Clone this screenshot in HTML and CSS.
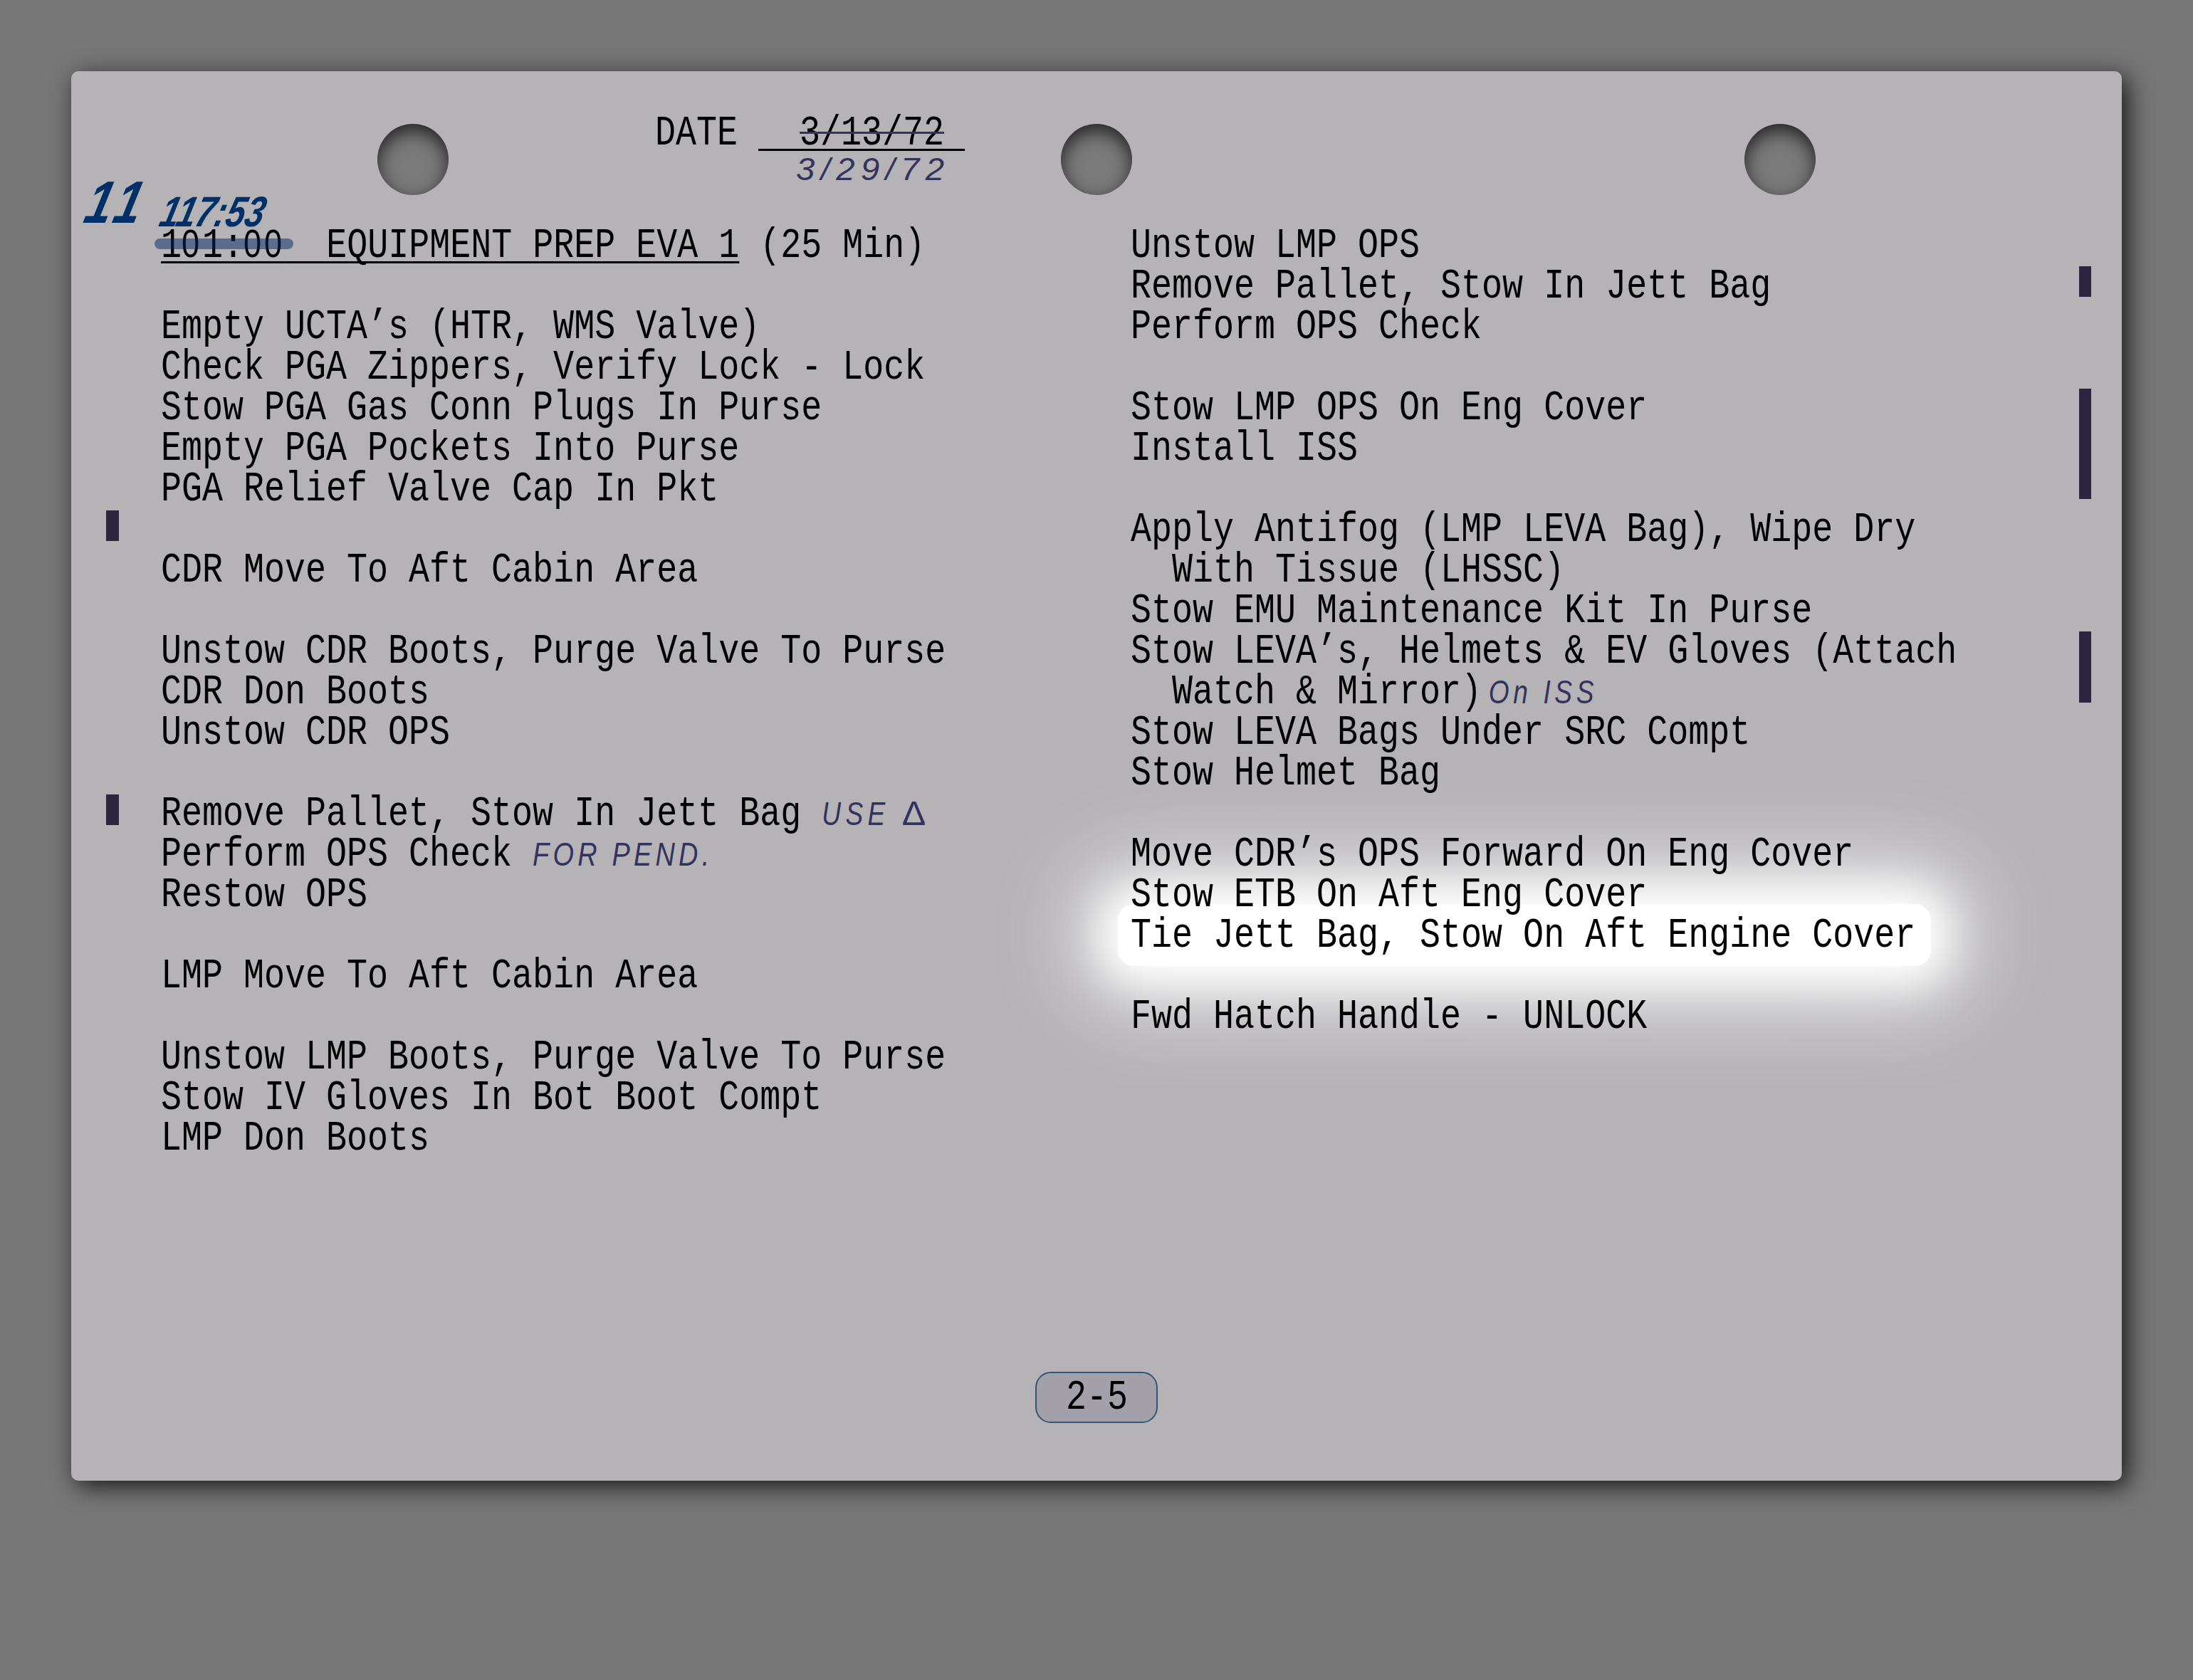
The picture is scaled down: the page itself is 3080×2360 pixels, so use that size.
FILE: index.html
```html
<!DOCTYPE html>
<html lang="en">
<head>
<meta charset="utf-8">
<title>Checklist page 2-5</title>
<link rel="stylesheet" href="styles.css">
</head>
<body>
<main class="paper">
  <div class="holes"><span class="hole"></span><span class="hole"></span><span class="hole"></span></div>
  <div class="highlight"></div>

  <span class="bar bar-l1"></span>
  <span class="bar bar-l2"></span>
  <span class="bar bar-r1"></span>
  <span class="bar bar-r2"></span>
  <span class="bar bar-r3"></span>

  <header class="date-row"><span class="line">DATE <span class="ul">  <span class="strike">3/13/72</span> </span></span></header>
  <span class="note new-date">3/29/72</span>

  <div class="columns">
    <section class="col">
      <div class="step">
        <div class="line"><span class="ul">1<span class="zero">0</span>1:<span class="zero">00</span>  EQUIPMENT PREP EVA 1</span> (25 Min)</div>
      </div>
      <div class="step">
        <div class="line">Empty UCTA’s (HTR, WMS Valve)</div>
        <div class="line">Check PGA Zippers, Verify Lock - Lock</div>
        <div class="line">Stow PGA Gas Conn Plugs In Purse</div>
        <div class="line">Empty PGA Pockets Into Purse</div>
        <div class="line">PGA Relief Valve Cap In Pkt</div>
      </div>
      <div class="step">
        <div class="line">CDR Move To Aft Cabin Area</div>
      </div>
      <div class="step">
        <div class="line">Unstow CDR Boots, Purge Valve To Purse</div>
        <div class="line">CDR Don Boots</div>
        <div class="line">Unstow CDR OPS</div>
      </div>
      <div class="step">
        <div class="line">Remove Pallet, Stow In Jett Bag <span class="note use">USE <span class="delta">Δ</span></span></div>
        <div class="line">Perform OPS Check <span class="note pend">FOR PEND.</span></div>
        <div class="line">Restow OPS</div>
      </div>
      <div class="step">
        <div class="line">LMP Move To Aft Cabin Area</div>
      </div>
      <div class="step">
        <div class="line">Unstow LMP Boots, Purge Valve To Purse</div>
        <div class="line">Stow IV Gloves In Bot Boot Compt</div>
        <div class="line">LMP Don Boots</div>
      </div>
    </section>
    <section class="col">
      <div class="step">
        <div class="line">Unstow LMP OPS</div>
        <div class="line">Remove Pallet, Stow In Jett Bag</div>
        <div class="line">Perform OPS Check</div>
      </div>
      <div class="step">
        <div class="line">Stow LMP OPS On Eng Cover</div>
        <div class="line">Install ISS</div>
      </div>
      <div class="step">
        <div class="line">Apply Antifog (LMP LEVA Bag), Wipe Dry</div>
        <div class="line">  With Tissue (LHSSC)</div>
        <div class="line">Stow EMU Maintenance Kit In Purse</div>
        <div class="line">Stow LEVA’s, Helmets &amp; EV Gloves (Attach</div>
        <div class="line">  Watch &amp; Mirror)<span class="note iss">On ISS</span></div>
        <div class="line">Stow LEVA Bags Under SRC Compt</div>
        <div class="line">Stow Helmet Bag</div>
      </div>
      <div class="step">
        <div class="line">Move CDR’s OPS Forward On Eng Cover</div>
        <div class="line">Stow ETB On Aft Eng Cover</div>
        <div class="line">Tie Jett Bag, Stow On Aft Engine Cover</div>
      </div>
      <div class="step">
        <div class="line">Fwd Hatch Handle - UNLOCK</div>
      </div>
    </section>
  </div>

  <span class="scrawl rev">11</span>
  <span class="scrawl time">117:53</span>
  <span class="time-strike"></span>

  <footer class="page-no"><span class="line">2-5</span></footer>
</main>
</body>
</html>
```

FILE: styles.css
```css
html, body {
  margin: 0;
  padding: 0;
  background: #777777;
}

.paper {
  position: relative;
  box-sizing: border-box;
  width: 2880px;
  height: 1980px;
  margin: 100px;
  padding: 59px 0 81px;
  display: flex;
  flex-direction: column;
  background: #b5b3b6;
  border-radius: 10px;
  box-shadow: 8px 8px 34px rgba(0, 0, 0, 0.8);
  color: #000;
  font-family: "Liberation Mono", monospace;
  font-size: 60px;
  line-height: 57px;
}

.line {
  display: block;
  white-space: pre;
  transform: scaleX(0.8056);
  transform-origin: 0 0;
}

.holes {
  position: absolute;
  left: 0;
  right: 0;
  top: 74px;
  display: flex;
  justify-content: space-around;
}

.hole {
  width: 100px;
  height: 100px;
  border-radius: 50%;
  background: #7a7a7a;
  box-shadow: inset 0 10px 26px rgba(0, 0, 0, 0.7);
}

.highlight {
  position: absolute;
  left: 1470px;
  top: 1170px;
  width: 1142px;
  height: 87px;
  border-radius: 22px;
  background: #fff;
  box-shadow: 0 0 60px 24px #fff, 0 0 130px 50px rgba(255, 255, 255, 0.7);
}

.bar {
  position: absolute;
  background: #2b2540;
}
.bar-l1 { left: 49px; top: 617px; width: 18px; height: 43px; }
.bar-l2 { left: 49px; top: 1016px; width: 18px; height: 43px; }
.bar-r1 { left: 2820px; top: 274px; width: 17px; height: 43px; }
.bar-r2 { left: 2820px; top: 446px; width: 17px; height: 155px; }
.bar-r3 { left: 2820px; top: 787px; width: 17px; height: 100px; }

.date-row {
  position: relative;
  padding-left: 820px;
}

.ul {
  text-decoration: underline 3px #000;
  text-decoration-skip-ink: none;
  text-underline-offset: 6px;
}

.strike {
  text-decoration: line-through 3px #33335f;
}

.zero {
  font-family: "Liberation Sans", sans-serif;
  font-size: 56px;
  line-height: 0;
  letter-spacing: 4.9px;
}

.note {
  color: #33335f;
  font-family: "Liberation Sans", sans-serif;
  font-style: italic;
  line-height: 0;
}

.new-date {
  position: absolute;
  left: 1018px;
  top: 138px;
  font-size: 45px;
  letter-spacing: 8px;
  white-space: nowrap;
  transform: scaleX(1.05);
  transform-origin: 0 0;
}

.use { font-size: 46px; letter-spacing: 8px; }
.delta {
  display: inline-block;
  font-style: normal;
  font-size: 48px;
  transform: scaleX(1.3);
  transform-origin: 0 100%;
}
.pend { font-size: 47px; letter-spacing: 6.5px; }
.iss { font-size: 46px; letter-spacing: 7px; margin-left: 12px; }

.columns {
  position: relative;
  display: grid;
  grid-template-columns: 1362px 1fr;
  margin-top: 101px;
  padding: 0 0 0 126px;
}

.col {
  display: flex;
  flex-direction: column;
  gap: 57px;
  min-width: 0;
}

.scrawl {
  position: absolute;
  color: #003068;
  font-family: "Liberation Sans", sans-serif;
  font-style: italic;
  font-weight: 700;
  white-space: nowrap;
  transform: skewX(-14deg) scaleX(0.8);
  transform-origin: 0 100%;
}
.rev { left: 12px; top: 142px; font-size: 84px; line-height: 84px; letter-spacing: 10px; }
.time { left: 119px; top: 168px; font-size: 60px; line-height: 60px; }

.time-strike {
  position: absolute;
  left: 117px;
  top: 235px;
  width: 195px;
  height: 15px;
  border-radius: 8px;
  background: rgba(0, 40, 100, 0.5);
}

.page-no {
  position: relative;
  box-sizing: border-box;
  width: 172px;
  height: 72px;
  margin: auto auto 0;
  padding: 6px 0 0 41px;
  background: #a3a0aa;
  border: 2px solid #33557a;
  border-radius: 22px;
}
```
